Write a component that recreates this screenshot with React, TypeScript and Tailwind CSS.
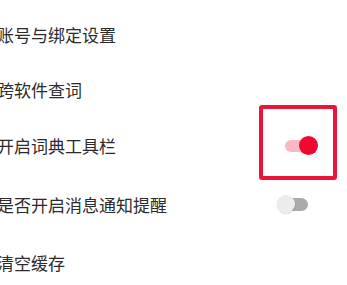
import React from "react";

type Row = { label: string; h: string; toggle?: "on" | "off" };

const ROWS: Row[] = [
  { label: "账号与绑定设置", h: "h-[56px]" },
  { label: "跨软件查词", h: "h-[55px]" },
  { label: "开启词典工具栏", h: "h-[57px]", toggle: "on" },
  { label: "是否开启消息通知提醒", h: "h-[60px]", toggle: "off" },
  { label: "清空缓存", h: "h-[56px]" },
];

function Toggle({ on }: { on: boolean }) {
  if (on) {
    return (
      <div className="relative w-[33px] h-[19px] mr-[29px] flex items-center">
        <div className="w-[28px] h-[12px] rounded-full bg-[#f9b9c4]" />
        <div className="absolute right-0 top-0 w-[19px] h-[19px] rounded-full bg-[#ee0a2c]" />
      </div>
    );
  }
  return (
    <div className="relative w-[31px] h-[18px] mr-[39px] flex items-center justify-end">
      <div className="w-[26px] h-[13px] rounded-full bg-[#ababab]" />
      <div className="absolute left-0 top-0 w-[18px] h-[18px] rounded-full bg-[#ececec] shadow-[0_1px_2px_rgba(0,0,0,0.15)]" />
    </div>
  );
}

export default function App() {
  return (
    <div
      className="relative w-[347px] h-[285px] bg-white overflow-hidden pt-[6px]"
      style={{ fontFamily: '"Noto Sans CJK SC", "Noto Sans", sans-serif' }}
    >
      {ROWS.map(r => (
        <div key={r.label} className={`flex items-center justify-between ${r.h}`}>
          <span className="ml-[-3px] text-[17px] text-[#2b2b2b] leading-none">{r.label}</span>
          {r.toggle && <Toggle on={r.toggle === "on"} />}
        </div>
      ))}
      {/* highlight box */}
      <div className="absolute left-[259px] top-[105px] w-[78px] h-[75px] border-4 border-[#e8163b] rounded-[3px]" />
    </div>
  );
}
